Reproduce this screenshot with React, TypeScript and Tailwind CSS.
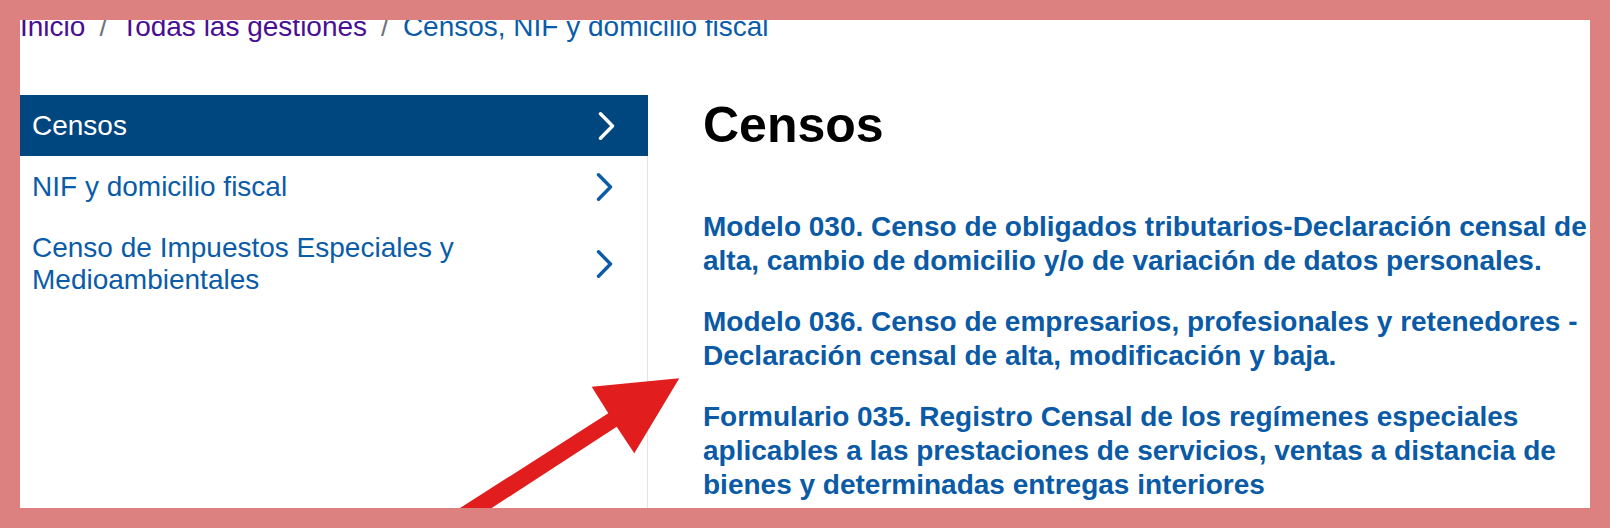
const sideItems = [
  { label: "Censos", active: true },
  { label: "NIF y domicilio fiscal", active: false },
  { label: "Censo de Impuestos Especiales y Medioambientales", active: false },
];

const links = [
  "Modelo 030. Censo de obligados tributarios-Declaración censal de alta, cambio de domicilio y/o de variación de datos personales.",
  "Modelo 036. Censo de empresarios, profesionales y retenedores - Declaración censal de alta, modificación y baja.",
  "Formulario 035. Registro Censal de los regímenes especiales aplicables a las prestaciones de servicios, ventas a distancia de bienes y determinadas entregas interiores",
];

function Chevron({ white }: { white: boolean }) {
  return (
    <svg width="18" height="28" viewBox="0 0 18 28" className="shrink-0" aria-hidden>
      <path
        d="M2.5 1.8 L14.5 14 L2.5 26.2"
        fill="none"
        stroke={white ? "#ffffff" : "#0b5ca8"}
        strokeWidth="3.4"
        strokeLinecap="round"
        strokeLinejoin="round"
      />
    </svg>
  );
}

function Breadcrumb() {
  return (
    <nav className="-mt-[9px] flex items-center whitespace-nowrap text-[28px] leading-[32px]">
      <span className="text-[#4a0e92]">Inicio</span>
      <span className="px-[14px] text-[#6c757d]">/</span>
      <span className="text-[#4a0e92]">Todas las gestiones</span>
      <span className="px-[14px] text-[#6c757d]">/</span>
      <span className="text-[#0b5ca8]">Censos, NIF y domicilio fiscal</span>
    </nav>
  );
}

function Sidebar() {
  return (
    <aside className="w-[628px] shrink-0 border-r border-[#e4e4e4]">
      <ul>
        {sideItems.map((item) => (
          <li
            key={item.label}
            className={
              item.active
                ? "-mr-px flex items-center justify-between bg-[#00467f] py-[14.5px] pl-[12px] pr-[32px] text-white"
                : "flex items-center justify-between py-[14.5px] pl-[12px] pr-[33px] text-[#0b5ca8]"
            }
          >
            <span className="max-w-[460px] text-[28px] leading-[32px]">{item.label}</span>
            <Chevron white={item.active} />
          </li>
        ))}
      </ul>
    </aside>
  );
}

function Arrow() {
  return (
    <svg
      className="pointer-events-none absolute left-0 top-0"
      width="1570"
      height="488"
      viewBox="0 0 1570 488"
      aria-hidden
    >
      <polygon
        points="659.3,358.3 571.7,366.7 588.3,393.3 390,520 422.5,520 596.7,406.7 614.3,433.3"
        fill="#e21d1d"
      />
    </svg>
  );
}

export default function App() {
  return (
    <div
      className="h-[528px] w-[1610px] bg-[#dc8080] p-[20px]"
      style={{ fontFamily: '"Liberation Sans", Arial, sans-serif' }}
    >
      <div className="relative h-[488px] w-[1570px] overflow-hidden bg-white">
        <Breadcrumb />
        <div className="mt-[52px] flex w-[1620px] items-stretch">
          <Sidebar />
          <main className="w-[960px] shrink-0 pb-[60px] pl-[55px]">
            <h1 className="mb-[55px] text-[50px] font-bold leading-[60px] text-black">Censos</h1>
            <div className="flex flex-col gap-[28px]">
              {links.map((text) => (
                <a key={text} className="w-[900px] text-[28px] font-bold leading-[33.6px] text-[#0a5aa6]">
                  {text}
                </a>
              ))}
            </div>
          </main>
        </div>
        <Arrow />
      </div>
    </div>
  );
}
